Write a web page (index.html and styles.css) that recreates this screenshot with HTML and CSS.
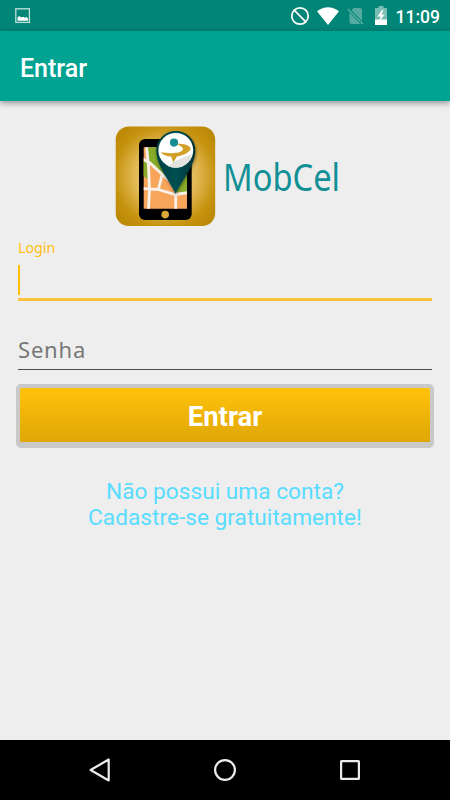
FILE: index.html
```html
<!DOCTYPE html>
<html lang="pt-BR">
<head>
    <meta charset="UTF-8">
    <meta name="viewport" content="width=device-width, initial-scale=1.0">
    <title>Entrar</title>
    <link rel="stylesheet" href="styles.css">
</head>
<body>
    <div class="status-bar">
        <svg class="status-picture" width="16" height="16" viewBox="0 0 16 16">
            <rect x="0.8" y="0.8" width="13.6" height="13.6" fill="none" stroke="#c2e1dd" stroke-width="1.3"/>
            <path d="M2.5 12.7V9.500l1.800-1.500 2 1.500 2-.7 1.500 1 1.700-.8 1.500 1.500v2.200z" fill="#fff"/>
        </svg>
        <div class="status-icons">
            <svg width="20" height="20" viewBox="0 0 20 20">
                <circle cx="10" cy="10" r="8.2" fill="none" stroke="#fff" stroke-width="1.7"/>
                <path d="M4.2 4.2l11.6 11.6" stroke="#fff" stroke-width="1.7"/>
            </svg>
            <svg class="wifi" width="22" height="18" viewBox="0 0 22 18">
                <path d="M0 4.2Q11-3.8 22 4.2L11 18z" fill="#fff"/>
            </svg>
            <svg class="no-sim" width="18" height="18" viewBox="0 0 18 18">
                <path d="M6.5 1H13a2 2 0 0 1 2 2v11L4.5 3.2zM2.5 5.5L13.5 17h-9a2 2 0 0 1-2-2z" fill="#54aca1"/>
                <path d="M.8 2L16 17.3" stroke="#54aca1" stroke-width="1.5"/>
            </svg>
            <svg class="battery" width="12" height="19" viewBox="0 0 12 19">
                <path d="M3.5 0h5v2H12v17H0V2h3.5z" fill="#79beb5"/>
                <path d="M0 13.5h12V19H0z" fill="#fff"/>
                <path d="M7 4L2.5 10.5h3l-1 4.500 5.300-6.500H6.500L8.500 4z" fill="#fff"/>
            </svg>
            <span class="clock">11:09</span>
        </div>
    </div>

    <header class="app-bar">
        <h1>Entrar</h1>
    </header>

    <main class="content">
        <div class="brand">
            <svg class="logo" width="101" height="101" viewBox="0 0 101 101">
                <defs>
                    <radialGradient id="gold" cx="50%" cy="50%" r="62%">
                        <stop offset="0" stop-color="#f5dc91"/>
                        <stop offset="0.5" stop-color="#e2b956"/>
                        <stop offset="0.82" stop-color="#c6930f"/>
                        <stop offset="1" stop-color="#bd8a08"/>
                    </radialGradient>
                    <linearGradient id="pin" x1="0" y1="0" x2="1" y2="0">
                        <stop offset="0" stop-color="#06403f"/>
                        <stop offset="0.5" stop-color="#065053"/>
                        <stop offset="1" stop-color="#033235"/>
                    </linearGradient>
                    <clipPath id="screen"><rect x="28.7" y="21.3" width="43.3" height="61.5"/></clipPath>
                    <filter id="shade" x="-30%" y="-30%" width="160%" height="160%">
                        <feDropShadow dx="0.5" dy="1" stdDeviation="1.5" flood-opacity="0.5"/>
                    </filter>
                </defs>
                <rect x="0.7" y="0.5" width="99.5" height="99.5" rx="13" fill="url(#gold)"/>
                <rect x="24" y="13" width="52.7" height="81" rx="6" fill="#000"/>
                <g clip-path="url(#screen)">
                    <path d="M28 21h45v62H28z" fill="#f8a55c"/>
                    <path d="M28 34l4 2 1 17-5-3zM32 21h20v32L33 36zM60 66l12-20v21z" fill="#86ac2a"/>
                    <path d="M27 32.5l8 4.5 14 13 12 10" fill="none" stroke="#f7f1ea" stroke-width="2.8"/>
                    <path d="M31.5 20l2 20 1 23-1 21M27 62.5l16 1 17 5 14-2M47 49l-3.500 14M60.700 67v18" fill="none" stroke="#f7f1ea" stroke-width="2.8"/>
                </g>
                <circle cx="50.2" cy="88.6" r="3.8" fill="#dba936"/>
                <path d="M60.700 68C55 55 41.300 40 41.300 24.500a19.500 19.500 0 0 1 39 0C80.300 40 66 55 60.700 68z" fill="url(#pin)" filter="url(#shade)"/>
                <circle cx="60.8" cy="24.3" r="17.4" fill="#fff"/>
                <path d="M60 35l17-7a17 17 0 0 1-15 13.500c-4 .3-7-.5-9-1.500z" fill="#e2e2df"/>
                <path d="M61 17.800c5-.4 14 .7 14.500 4.700.3 3.500-7.500 7-13.500 8L58.200 36.500l-2-6c-4-.2-7.900-1.200-10.400-4.200 7 1.200 15.700 1.200 19.700-.6 3.800-1.800 4-4.400-4.500-7.900z" fill="#d2a028"/>
                <circle cx="59" cy="16.600" r="4.100" fill="#168c93"/>
            </svg>
            <svg class="wordmark" width="160" height="80" viewBox="0 0 160 80">
                <text class="wordmark-text" x="5" y="54" textLength="117" lengthAdjust="spacingAndGlyphs">MobCel</text>
            </svg>
        </div>

        <form class="login-form">
            <div class="field focused">
                <label>Login</label>
                <div class="input-line"><span class="caret"></span></div>
            </div>
            <div class="field password">Senha</div>
            <button type="button" class="btn">Entrar</button>
        </form>

        <a class="signup">Não possui uma conta?<br>Cadastre-se gratuitamente!</a>
    </main>

    <nav class="nav-bar">
        <svg width="24" height="26" viewBox="0 0 24 26">
            <path d="M20.700 2.500v21L2.600 13z" fill="none" stroke="#ececec" stroke-width="2.2" stroke-linejoin="round"/>
        </svg>
        <svg width="24" height="24" viewBox="0 0 24 24">
            <circle cx="12" cy="12" r="9.9" fill="none" stroke="#ececec" stroke-width="2.2"/>
        </svg>
        <svg width="24" height="24" viewBox="0 0 24 24">
            <rect x="3.1" y="3.1" width="17.8" height="17.8" rx="0.5" fill="none" stroke="#ececec" stroke-width="2.2"/>
        </svg>
    </nav>
</body>
</html>
```

FILE: styles.css
```css
:root {
    --primary-color: #00a392;
    --primary-dark: #008577;
    --accent-color: #ffbf13;
    --background: #eee;
}

* {
    box-sizing: border-box;
    margin: 0;
    padding: 0;
}

body {
    display: flex;
    flex-direction: column;
    height: 100vh;
    overflow: hidden;
    font-family: Roboto, sans-serif;
    background-color: var(--background);
}

svg {
    display: block;
    flex-shrink: 0;
}

.status-bar {
    display: flex;
    align-items: center;
    justify-content: space-between;
    height: 31px;
    padding: 0 10px 0 15px;
    background-color: var(--primary-dark);
}

.status-icons {
    display: flex;
    align-items: center;
}

.wifi {
    margin-left: 7px;
}

.no-sim {
    margin-left: 8px;
}

.battery {
    margin-left: 10px;
}

.clock {
    width: 45px;
    margin-left: 8px;
    padding-top: 2px;
    color: #fff;
    font-size: 17.5px;
    font-weight: 500;
    line-height: 22px;
    text-align: right;
}

.app-bar {
    display: flex;
    align-items: center;
    height: 70px;
    padding: 5px 20px 0;
    background-color: var(--primary-color);
    box-shadow: 0 2px 6px rgba(0, 0, 0, 0.4);
}

.app-bar h1 {
    color: #fff;
    font-size: 25px;
    font-weight: 500;
    line-height: 30px;
}

.content {
    flex: 1;
    padding: 25px 18px 0;
}

.brand {
    display: flex;
    align-items: center;
    height: 101px;
    padding-left: 97px;
}

.wordmark {
    margin-left: 2px;
}

.wordmark-text {
    font-family: "Noto Sans", sans-serif;
    font-size: 39px;
    fill: #129096;
}

.login-form {
    display: flex;
    flex-direction: column;
    padding-top: 10px;
}

.field {
    font-family: "Noto Sans", sans-serif;
}

.field label {
    display: block;
    height: 22px;
    color: var(--accent-color);
    font-size: 14.2px;
    line-height: 22px;
}

.input-line {
    height: 42px;
    padding-top: 6px;
    border-bottom: 3px solid #ffc23c;
}

.caret {
    display: block;
    width: 2px;
    height: 30px;
    background-color: #ffc107;
}

.password {
    height: 69px;
    padding-top: 33px;
    border-bottom: 1px solid #4b4b4b;
    color: #777;
    font-size: 22px;
    line-height: 30px;
    letter-spacing: 0.8px;
}

.btn {
    height: 64px;
    margin: 14px -2px 0;
    padding-top: 2px;
    border: 4px solid #c9c9c9;
    border-bottom-width: 6px;
    border-radius: 5px;
    background: linear-gradient(#ffc20a, #dfa707) padding-box;
    color: #fff;
    font-family: Roboto, sans-serif;
    font-size: 27.5px;
    font-weight: 700;
}

.signup {
    display: block;
    margin-top: 31px;
    color: #58dcff;
    font-size: 22.7px;
    line-height: 26px;
    text-align: center;
}

.nav-bar {
    display: flex;
    align-items: center;
    justify-content: space-between;
    height: 60px;
    padding: 0 88px;
    background-color: #000;
}
```
